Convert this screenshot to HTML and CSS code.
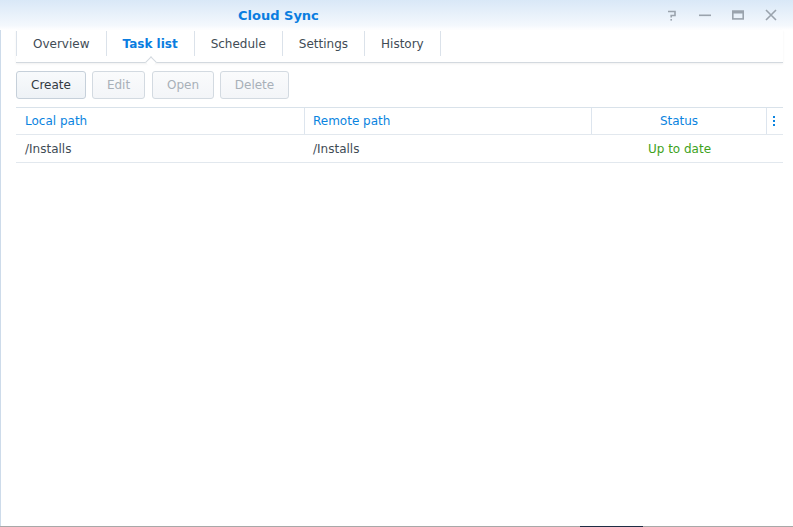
FILE: index.html
```html
<!DOCTYPE html>
<html>
<head>
<meta charset="utf-8">
<link rel="stylesheet" href="styles.css">
</head>
<body>
<div class="window">
  <div class="titlebar">
    <div class="title">Cloud Sync</div>
    <div class="winbtns">
      <svg class="wb" width="14" height="14" viewBox="0 0 14 14"><path d="M3 3.5 H10 V7.5 H6.2 V9.5" fill="none" stroke="#9aa3ad" stroke-width="1.6"/><rect x="5.4" y="11" width="1.6" height="1.6" fill="#9aa3ad"/></svg>
      <svg class="wb" width="14" height="14" viewBox="0 0 14 14"><rect x="1" y="6.5" width="12" height="1.6" fill="#9aa3ad"/></svg>
      <svg class="wb" width="14" height="14" viewBox="0 0 14 14"><rect x="1.8" y="3.3" width="10.4" height="7.6" fill="none" stroke="#9aa3ad" stroke-width="1.6"/><rect x="1" y="2.5" width="12" height="3" fill="#9aa3ad"/></svg>
      <svg class="wb" width="14" height="14" viewBox="0 0 14 14"><path d="M2 2 L12 12 M12 2 L2 12" stroke="#9aa3ad" stroke-width="1.6"/></svg>
    </div>
  </div>
  <div class="body">
    <div class="tabs">
      <div class="tab">Overview</div>
      <div class="tab active">Task list<span class="notch"></span></div>
      <div class="tab">Schedule</div>
      <div class="tab">Settings</div>
      <div class="tab">History</div>
    </div>
    <div class="toolbar">
      <button class="btn b-create">Create</button>
      <button class="btn b-edit disabled">Edit</button>
      <button class="btn b-open disabled">Open</button>
      <button class="btn b-delete disabled">Delete</button>
    </div>
    <div class="grid">
      <div class="row head">
        <div class="cell">Local path</div>
        <div class="cell">Remote path</div>
        <div class="cell center">Status</div>
        <div class="cell menu"><svg width="3" height="11" viewBox="0 0 3 11"><rect x="0" y="0" width="2" height="2" fill="#0a84e0"/><rect x="0" y="4" width="2" height="2" fill="#0a84e0"/><rect x="0" y="8" width="2" height="2" fill="#0a84e0"/></svg></div>
      </div>
      <div class="row data">
        <div class="cell">/Installs</div>
        <div class="cell">/Installs</div>
        <div class="cell center ok">Up to date</div>
        <div class="cell"></div>
      </div>
    </div>
  </div>
  <div class="taskbar"><span class="dark"></span></div>
</div>
</body>
</html>
```

FILE: styles.css
```css
html, body {
  margin: 0;
  padding: 0;
  background: #fff;
}
body {
  font-family: "DejaVu Sans", Verdana, sans-serif;
  font-size: 12px;
  color: #414b55;
}
.window {
  width: 793px;
  height: 527px;
  display: flex;
  flex-direction: column;
  overflow: hidden;
}
.titlebar {
  height: 30px;
  flex: none;
  display: flex;
  align-items: center;
  background: linear-gradient(#d9e8f7, #f4f8fd 85%, #ffffff);
}
.title {
  padding-left: 238px;
  font-weight: bold;
  font-size: 13px;
  color: #0a7de0;
  flex: 1;
  margin-top: 1px;
}
.winbtns {
  display: flex;
  gap: 19px;
  padding-right: 15px;
  margin-top: -1px;
}
.wb { display: block; }
.body {
  flex: 1;
  border-left: 1px solid #cddbea;
  padding: 0 10px 0 15px;
}
.tabs {
  display: flex;
  height: 31px;
  padding-top: 1px;
  border-bottom: 1px solid #d3d9df;
  box-shadow: 0 1px 2px rgba(0,0,0,0.06);
  position: relative;
}
.tab {
  height: 25px;
  padding: 0 16px;
  display: flex;
  align-items: center;
  border-right: 1px solid #dbe2ea;
  position: relative;
  white-space: nowrap;
}
.tab:first-child { border-left: 1px solid #dbe2ea; }
.tab.active {
  color: #0a7de0;
  font-weight: bold;
  font-size: 12px;
}
.notch {
  position: absolute;
  left: 40px;
  bottom: -10px;
  width: 7px;
  height: 7px;
  background: #fff;
  border-left: 1px solid #d3d9df;
  border-top: 1px solid #d3d9df;
  transform: rotate(45deg);
}
.toolbar {
  display: flex;
  gap: 6px;
  padding-top: 8px;
  height: 28px;
}
.btn {
  font-family: inherit;
  font-size: 12px;
  height: 28px;
  padding: 0;
  border: 1px solid #c6d0da;
  border-radius: 3px;
  background: linear-gradient(#f8fafc, #eef2f6);
  color: #333a42;
}
.b-create { width: 70px; }
.b-edit { width: 53px; }
.b-open { width: 62px; margin-left: 1px; }
.b-delete { width: 69px; }
.btn.disabled {
  color: #a8b0b8;
  border-color: #d3dae1;
  background: linear-gradient(#fafbfc, #f3f5f8);
}
.grid {
  margin-top: 8px;
  border-top: 1px solid #d9e2ea;
}
.row {
  display: grid;
  grid-template-columns: 289px 287px 175px 16px;
  border-bottom: 1px solid #e2e8ee;
}
.row.head { height: 26px; }
.row.data { height: 27px; }
.cell {
  display: flex;
  align-items: center;
  padding-left: 8px;
  white-space: nowrap;
}
.cell:first-child { padding-left: 9px; }
.head .cell {
  color: #0a84e0;
  border-right: 1px solid #dde5ee;
}
.head .cell:last-child { border-right: none; }
.cell.center { justify-content: center; padding-left: 0; }
.cell.menu { padding-left: 6px; }
.ok { color: #3ea21c; }
.taskbar {
  height: 1px;
  flex: none;
  background: #a8a8a8;
  position: relative;
}
.dark {
  position: absolute;
  left: 580px;
  width: 63px;
  height: 1px;
  background: #1f2d44;
}
```
